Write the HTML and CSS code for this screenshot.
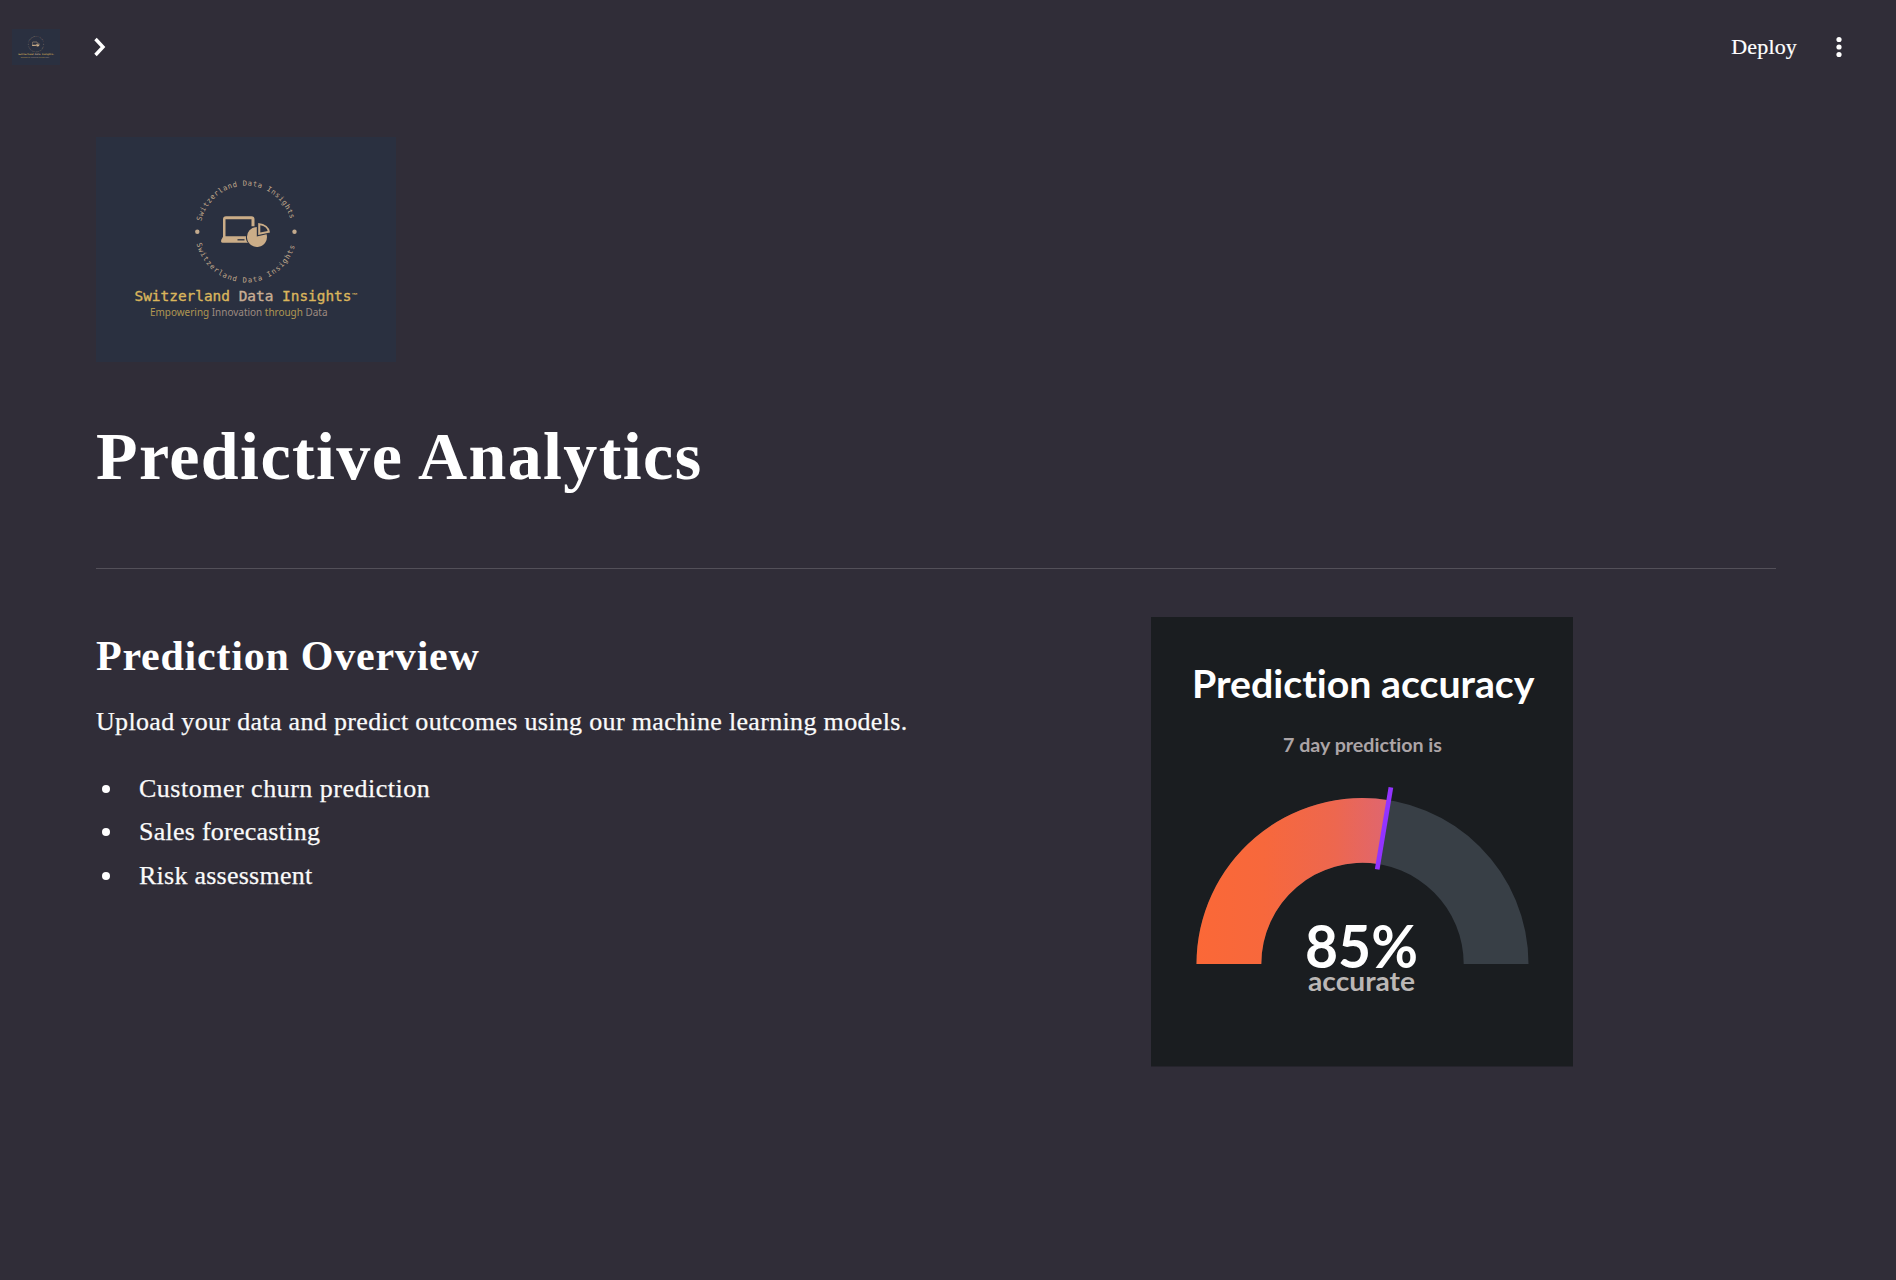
FILE: index.html
```html
<!DOCTYPE html>
<html lang="en">
<head>
<meta charset="utf-8">
<title>Predictive Analytics</title>
<link rel="stylesheet" href="styles.css">
</head>
<body>
<header class="topbar">
  <div class="topbar-left">
    <svg class="logo-small" viewBox="0 0 300 225" aria-hidden="true"><use href="#brand"/></svg>
    <svg class="chevron" viewBox="0 0 12 20" aria-hidden="true"><path d="M2 2l7.500 8L2 18"/></svg>
  </div>
  <div class="topbar-right">
    <span class="deploy">Deploy</span>
    <svg class="dots" viewBox="0 0 6 22" aria-hidden="true"><circle cx="3" cy="3.500" r="2.600"/><circle cx="3" cy="11" r="2.600"/><circle cx="3" cy="18.500" r="2.600"/></svg>
  </div>
</header>
<main class="page">
  <svg class="logo" viewBox="0 0 300 225" role="img" aria-label="Switzerland Data Insights">
    <defs>
      <path id="arc-top" d="M105.200 84.200A46 46 0 0 1 194.800 84.200"/>
      <path id="arc-bottom" d="M100.600 106.500A50.800 50.800 0 0 0 199.400 106.500"/>
    </defs>
    <g id="brand">
      <rect width="300" height="225" fill="#2a3040"/>
      <g class="ring">
        <text textLength="121"><textPath href="#arc-top" textLength="121">Switzerland Data Insights</textPath></text>
        <text textLength="133"><textPath href="#arc-bottom" textLength="133">Switzerland Data Insights</textPath></text>
        <circle cx="101.300" cy="94.800" r="2.200"/><circle cx="198.500" cy="94.800" r="2.200"/>
      </g>
      <g fill="#cbad88">
        <path fill-rule="evenodd" d="M129 79.200h26.500q3 0 3 3v7h-3v-7h-26v17h20.500q-.5 4 2 6.500h-25.500q-2 0-1.200-3l1.700-3v-17.500q0-3 3-3z"/>
        <path d="M160.800 90v9.500l9.800-2.200a10 10 0 1 1-9.800-7.300z"/>
        <path fill-rule="evenodd" d="M162.200 86v12l11.800-2.400q-1-8.600-11.800-9.600zm2.100 2.200q6.500 1 7.400 5.900l-7.400 1.500z"/>
      </g>
      <path d="M141.500 102.800h7" stroke="#2a3040" stroke-width="1.300"/>
      <text class="brand-name" x="38.500" y="164" textLength="217" lengthAdjust="spacingAndGlyphs">Switzerland <tspan class="tan">Data</tspan> Insights</text>
      <text class="brand-tm" x="255.500" y="160">™</text>
      <text class="brand-tag" x="54" y="178.700" textLength="177.500" lengthAdjust="spacingAndGlyphs">Empowering <tspan class="grey">Innovation</tspan> through <tspan class="grey">Data</tspan></text>
    </g>
  </svg>
  <h1 class="title">Predictive Analytics</h1>
  <hr class="rule">
  <div class="columns">
    <section class="overview">
      <h2 class="subtitle">Prediction Overview</h2>
      <p class="lead">Upload your data and predict outcomes using our machine learning models.</p>
      <ul class="list">
        <li class="wide">Customer churn prediction</li>
        <li>Sales forecasting</li>
        <li>Risk assessment</li>
      </ul>
    </section>
    <section class="chart">
      <svg class="gauge" viewBox="0 0 422.500 449.500" role="img" aria-label="Prediction accuracy 85%">
        <defs>
          <linearGradient id="heat" gradientUnits="userSpaceOnUse" x1="45" y1="0" x2="238" y2="0">
            <stop offset="0" stop-color="#fb6837"/><stop offset=".35" stop-color="#f7683c"/><stop offset=".72" stop-color="#ed674f"/><stop offset="1" stop-color="#df6670"/>
          </linearGradient>
        </defs>
        <rect width="422.500" height="449.500" fill="#1a1d20"/>
        <path fill="#383f46" d="M45.500 347A166 166 0 0 1 377.500 347H312.700A101.200 101.200 0 0 0 110.300 347z"/>
        <path fill="url(#heat)" d="M45.500 347A166 166 0 0 1 238 183.200L227 247A101.200 101.200 0 0 0 110.300 347z"/>
        <path stroke="#9333ff" stroke-width="4.700" d="M239.900 170.300L226.200 252.300"/>
        <g class="gauge-text">
          <text class="g-title" x="41" y="80.500" textLength="342.500" lengthAdjust="spacingAndGlyphs">Prediction accuracy</text>
          <text class="g-sub" x="132" y="135.300" textLength="159" lengthAdjust="spacingAndGlyphs">7 day prediction is</text>
          <text class="g-value" x="154" y="350.500" textLength="113" lengthAdjust="spacingAndGlyphs">85%</text>
          <text class="g-label" x="157" y="373.700" textLength="107" lengthAdjust="spacingAndGlyphs">accurate</text>
        </g>
      </svg>
    </section>
  </div>
</main>
</body>
</html>
```
FILE: styles.css
```css
* { box-sizing: border-box; }
body {
  margin: 0;
  min-height: 1280px;
  background: #302d38;
  color: #fafafa;
  font-family: "Liberation Serif", serif;
  font-size: 26px;
}
svg { display: block; }

.topbar { display: flex; justify-content: space-between; align-items: center; height: 94px; padding: 0 54px 0 12px; }
.topbar-left, .topbar-right { display: flex; align-items: center; }
.logo-small { width: 48px; height: 36px; }
.chevron { width: 13px; height: 20px; margin-left: 33px; fill: none; stroke: #fff; stroke-width: 3.4; }
.deploy { font-size: 22px; line-height: 26px; letter-spacing: .15px; -webkit-text-stroke: .2px #fff; color: #fff; }
.dots { width: 6px; height: 22px; margin-left: 39px; fill: #fff; }

.page { padding: 43px 120px 0 96px; }
.logo { width: 300px; height: 225px; }
.ring { fill: #c3aa8d; font: 400 7.200px "DejaVu Sans Mono", monospace; }
.brand-name { font: 400 13.600px "DejaVu Sans Mono", monospace; fill: #dab55c; stroke: #dab55c; stroke-width: .35px; }
.brand-tm { font: 700 6px "Liberation Sans", sans-serif; fill: #dab55c; }
.brand-tag { font: 400 11px "Noto Sans", sans-serif; fill: #b09752; }
.tan { fill: #c9ae94; stroke: #c9ae94; }
.grey { fill: #9d8b80; }

.title { margin: 54px 0 0; height: 80px; font-size: 68px; line-height: 80px; font-weight: 700; letter-spacing: 1.4px; color: #fff; white-space: nowrap; }
.rule { margin: 72px 0 0; height: 1px; border: 0; background: #535059; }
.columns { display: grid; grid-template-columns: 1054.500px 1fr; padding-top: 48px; }
.subtitle { margin: 14px 0 0; font-size: 42px; line-height: 50px; font-weight: 700; letter-spacing: .77px; color: #fff; }
.lead { margin: 22px 0 0; line-height: 38px; letter-spacing: .33px; -webkit-text-stroke: .25px #fafafa; white-space: nowrap; }
.list { margin: 26px 0 0; padding: 0; list-style: none; letter-spacing: .25px; -webkit-text-stroke: .25px #fafafa; }
.list .wide { letter-spacing: .5px; }
.list li { display: flex; align-items: center; height: 43.500px; line-height: 38px; }
.list li::before { content: ""; width: 8px; height: 8px; margin: 0 29px 0 6px; border-radius: 50%; background: #fff; }
.gauge { width: 422.500px; height: 449.500px; }
.gauge-text { font-family: Lato, sans-serif; font-weight: 700; font-variant-ligatures: none; }
.g-title { font-size: 37.500px; fill: #fff; }
.g-sub { font-size: 19.500px; fill: #aca5a7; }
.g-value { font-size: 60px; fill: #fff; }
.g-label { font-size: 26px; fill: #bbb7b5; }
```
